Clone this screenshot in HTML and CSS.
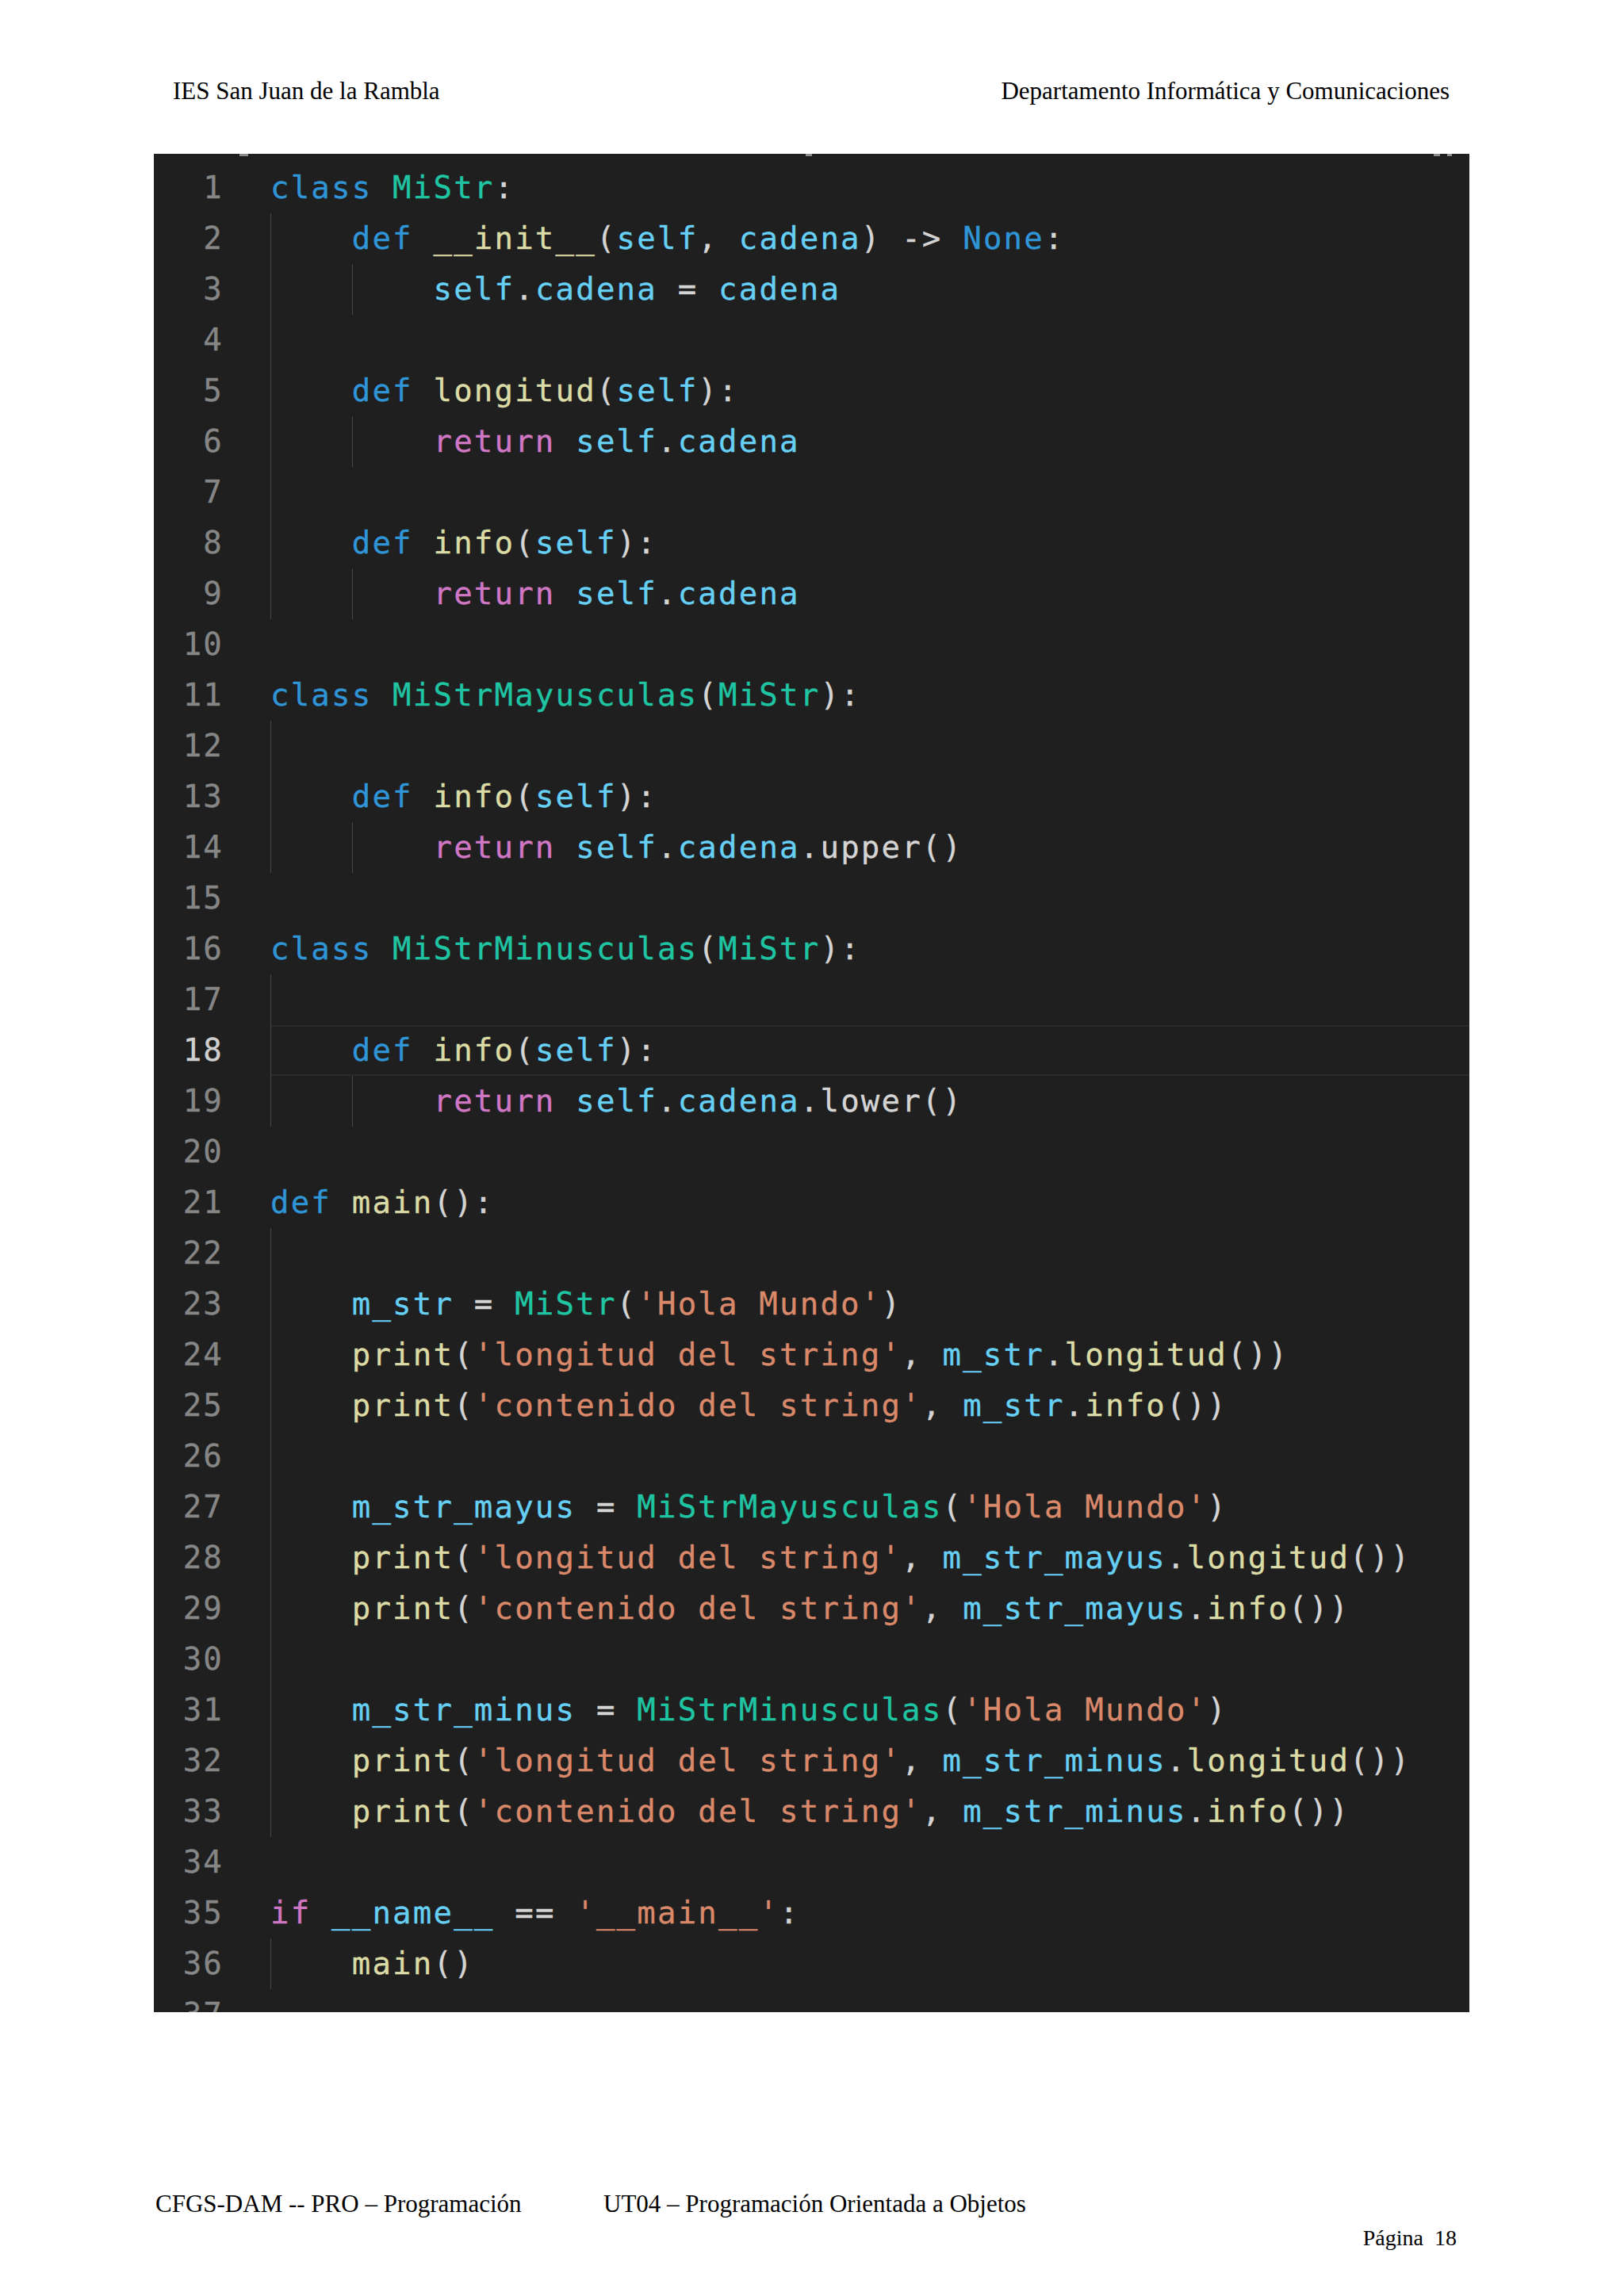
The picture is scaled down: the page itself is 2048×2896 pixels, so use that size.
FILE: index.html
```html
<!DOCTYPE html>
<html lang="es">
<head>
<meta charset="utf-8">
<title>UT04 – Programación Orientada a Objetos</title>
<link rel="stylesheet" href="styles.css">
</head>
<body>
<div class="page">
  <header class="top">
    <span>IES San Juan de la Rambla</span>
    <span>Departamento Informática y Comunicaciones</span>
  </header>

  <div class="editor">
    <span class="mark m1"></span><span class="mark m2"></span><span class="mark m3"></span><span class="mark m4"></span>
    <div class="line"><span class="no">1</span><span class="code"><span class="k">class</span> <span class="c">MiStr</span>:</span></div>
    <div class="line"><span class="no">2</span><span class="code"><i class="g">    </i><span class="k">def</span> <span class="f">__init__</span>(<span class="v">self</span>, <span class="v">cadena</span>) -&gt; <span class="k">None</span>:</span></div>
    <div class="line"><span class="no">3</span><span class="code"><i class="g">    </i><i class="g">    </i><span class="v">self</span>.<span class="v">cadena</span> = <span class="v">cadena</span></span></div>
    <div class="line"><span class="no">4</span><span class="code"><i class="g">    </i></span></div>
    <div class="line"><span class="no">5</span><span class="code"><i class="g">    </i><span class="k">def</span> <span class="f">longitud</span>(<span class="v">self</span>):</span></div>
    <div class="line"><span class="no">6</span><span class="code"><i class="g">    </i><i class="g">    </i><span class="r">return</span> <span class="v">self</span>.<span class="v">cadena</span></span></div>
    <div class="line"><span class="no">7</span><span class="code"><i class="g">    </i></span></div>
    <div class="line"><span class="no">8</span><span class="code"><i class="g">    </i><span class="k">def</span> <span class="f">info</span>(<span class="v">self</span>):</span></div>
    <div class="line"><span class="no">9</span><span class="code"><i class="g">    </i><i class="g">    </i><span class="r">return</span> <span class="v">self</span>.<span class="v">cadena</span></span></div>
    <div class="line"><span class="no">10</span><span class="code"></span></div>
    <div class="line"><span class="no">11</span><span class="code"><span class="k">class</span> <span class="c">MiStrMayusculas</span>(<span class="c">MiStr</span>):</span></div>
    <div class="line"><span class="no">12</span><span class="code"><i class="g">    </i></span></div>
    <div class="line"><span class="no">13</span><span class="code"><i class="g">    </i><span class="k">def</span> <span class="f">info</span>(<span class="v">self</span>):</span></div>
    <div class="line"><span class="no">14</span><span class="code"><i class="g">    </i><i class="g">    </i><span class="r">return</span> <span class="v">self</span>.<span class="v">cadena</span>.upper()</span></div>
    <div class="line"><span class="no">15</span><span class="code"></span></div>
    <div class="line"><span class="no">16</span><span class="code"><span class="k">class</span> <span class="c">MiStrMinusculas</span>(<span class="c">MiStr</span>):</span></div>
    <div class="line"><span class="no">17</span><span class="code"><i class="g">    </i></span></div>
    <div class="line cur"><span class="no">18</span><span class="code"><i class="g">    </i><span class="k">def</span> <span class="f">info</span>(<span class="v">self</span>):</span></div>
    <div class="line"><span class="no">19</span><span class="code"><i class="g">    </i><i class="g">    </i><span class="r">return</span> <span class="v">self</span>.<span class="v">cadena</span>.lower()</span></div>
    <div class="line"><span class="no">20</span><span class="code"></span></div>
    <div class="line"><span class="no">21</span><span class="code"><span class="k">def</span> <span class="f">main</span>():</span></div>
    <div class="line"><span class="no">22</span><span class="code"><i class="g">    </i></span></div>
    <div class="line"><span class="no">23</span><span class="code"><i class="g">    </i><span class="v">m_str</span> = <span class="c">MiStr</span>(<span class="s">'Hola Mundo'</span>)</span></div>
    <div class="line"><span class="no">24</span><span class="code"><i class="g">    </i><span class="f">print</span>(<span class="s">'longitud del string'</span>, <span class="v">m_str</span>.<span class="f">longitud</span>())</span></div>
    <div class="line"><span class="no">25</span><span class="code"><i class="g">    </i><span class="f">print</span>(<span class="s">'contenido del string'</span>, <span class="v">m_str</span>.<span class="f">info</span>())</span></div>
    <div class="line"><span class="no">26</span><span class="code"><i class="g">    </i></span></div>
    <div class="line"><span class="no">27</span><span class="code"><i class="g">    </i><span class="v">m_str_mayus</span> = <span class="c">MiStrMayusculas</span>(<span class="s">'Hola Mundo'</span>)</span></div>
    <div class="line"><span class="no">28</span><span class="code"><i class="g">    </i><span class="f">print</span>(<span class="s">'longitud del string'</span>, <span class="v">m_str_mayus</span>.<span class="f">longitud</span>())</span></div>
    <div class="line"><span class="no">29</span><span class="code"><i class="g">    </i><span class="f">print</span>(<span class="s">'contenido del string'</span>, <span class="v">m_str_mayus</span>.<span class="f">info</span>())</span></div>
    <div class="line"><span class="no">30</span><span class="code"><i class="g">    </i></span></div>
    <div class="line"><span class="no">31</span><span class="code"><i class="g">    </i><span class="v">m_str_minus</span> = <span class="c">MiStrMinusculas</span>(<span class="s">'Hola Mundo'</span>)</span></div>
    <div class="line"><span class="no">32</span><span class="code"><i class="g">    </i><span class="f">print</span>(<span class="s">'longitud del string'</span>, <span class="v">m_str_minus</span>.<span class="f">longitud</span>())</span></div>
    <div class="line"><span class="no">33</span><span class="code"><i class="g">    </i><span class="f">print</span>(<span class="s">'contenido del string'</span>, <span class="v">m_str_minus</span>.<span class="f">info</span>())</span></div>
    <div class="line"><span class="no">34</span><span class="code"></span></div>
    <div class="line"><span class="no">35</span><span class="code"><span class="r">if</span> <span class="v">__name__</span> == <span class="s">'__main__'</span>:</span></div>
    <div class="line"><span class="no">36</span><span class="code"><i class="g">    </i><span class="f">main</span>()</span></div>
    <div class="line"><span class="no">37</span><span class="code"></span></div>
  </div>

  <footer class="bottom">
    <div class="foot-row">
      <span class="course">CFGS-DAM -- PRO – Programación</span>
      <span>UT04 – Programación Orientada a Objetos</span>
    </div>
    <div class="pageno">Página&nbsp; 18</div>
  </footer>
</div>
</body>
</html>
```
FILE: styles.css
```css
body {
  margin: 0;
  background: #ffffff;
}

.page {
  width: 2048px;
  height: 2896px;
  font-family: "Liberation Serif", "Times New Roman", serif;
  color: #000000;
  overflow: hidden;
}

.top {
  display: flex;
  justify-content: space-between;
  padding: 97px 220px 0 218px;
  height: 36px;
  font-size: 31px;
  line-height: 36px;
}

.editor {
  position: relative;
  box-sizing: border-box;
  margin: 61px 0 0 194px;
  width: 1659px;
  height: 2344px;
  padding-top: 11px;
  background: #1f1f1f;
  overflow: hidden;
  font-family: "DejaVu Sans Mono", "Liberation Mono", monospace;
  font-size: 39px;
  line-height: 64px;
  letter-spacing: 2.2px;
  color: #d4d4d4;
  -webkit-text-stroke: 0.35px currentColor;
}

.mark {
  position: absolute;
  top: 0;
  height: 3px;
  background: #8c8c8c;
}
.m1 { left: 108px; width: 11px; }
.m2 { left: 822px; width: 8px; }
.m3 { left: 1614px; width: 8px; }
.m4 { left: 1631px; width: 6px; }

.line {
  display: flex;
  height: 64px;
}

.no {
  flex: none;
  width: 88px;
  text-align: right;
  color: #868686;
}

.code {
  flex: 1;
  margin-left: 59px;
  white-space: pre;
  color: #d4d4d4;
}

.g {
  display: inline-block;
  font-style: normal;
  background: linear-gradient(#474747, #474747) no-repeat left top / 1px 100%;
}

.cur .no {
  color: #cfcfcf;
}
.cur .code {
  box-shadow: inset 0 2px #2b2b2b, inset 0 -2px #2b2b2b;
}

.k { color: #2f95d7; }
.c { color: #1fc4a3; }
.f { color: #dbdba6; }
.v { color: #66cff3; }
.r { color: #cf77c5; }
.s { color: #d9886a; }

.bottom {
  margin-top: 224px;
  padding-left: 196px;
}

.foot-row {
  display: flex;
  font-size: 31px;
  line-height: 36px;
}

.course {
  width: 565px;
}

.pageno {
  margin-top: 7px;
  padding-right: 211px;
  text-align: right;
  font-size: 28px;
  line-height: 36px;
}
```
